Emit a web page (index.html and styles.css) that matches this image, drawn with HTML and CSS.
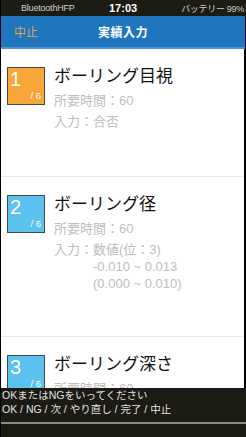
FILE: index.html
```html
<!DOCTYPE html>
<html lang="ja">
<head>
    <meta charset="UTF-8">
    <meta name="viewport" content="width=device-width, initial-scale=1.0">
    <title>実績入力</title>
    <link rel="stylesheet" href="styles.css">
</head>
<body>
    <div class="screen">
        <div class="statusbar">
            <span class="carrier">BluetoothHFP</span>
            <span class="clock">17:03</span>
            <span class="battery">バッテリー 99%</span>
        </div>
        <div class="navbar">
            <a class="nav-cancel" href="#">中止</a>
            <div class="nav-title">実績入力</div>
        </div>
        <div class="list">
            <div class="item">
                <div class="step step-current">
                    <span class="step-no">1</span>
                    <span class="step-total">/ 6</span>
                </div>
                <div class="item-body">
                    <div class="item-title">ボーリング目視</div>
                    <p class="detail">所要時間：60</p>
                    <p class="detail">入力：合否</p>
                </div>
            </div>
            <div class="item">
                <div class="step">
                    <span class="step-no">2</span>
                    <span class="step-total">/ 6</span>
                </div>
                <div class="item-body">
                    <div class="item-title">ボーリング径</div>
                    <p class="detail">所要時間：60</p>
                    <div class="detail input-row">
                        <span>入力：</span>
                        <span>数値(位：3)<br>-0.010 ~ 0.013<br>(0.000 ~ 0.010)</span>
                    </div>
                </div>
            </div>
            <div class="item">
                <div class="step">
                    <span class="step-no">3</span>
                    <span class="step-total">/ 6</span>
                </div>
                <div class="item-body">
                    <div class="item-title">ボーリング深さ</div>
                    <p class="detail">所要時間：60</p>
                </div>
            </div>
        </div>
        <div class="voice">
            <div class="voice-prompt">OKまたはNGをいってください</div>
            <div class="voice-prompt">OK / NG / 次 / やり直し / 完了 / 中止</div>
            <div class="voice-line"></div>
        </div>
    </div>
</body>
</html>
```

FILE: styles.css
```css
html, body {
    margin: 0;
    height: 100%;
    background-color: #000;
}
body {
    font-family: "Liberation Sans", "Noto Sans CJK JP", sans-serif;
    overflow: hidden;
}
.screen {
    position: relative;
    height: 437px;
    margin-left: 1px;
    overflow: hidden;
}
.statusbar {
    display: flex;
    align-items: center;
    height: 16px;
    background-color: #1c1b14;
    color: #cfcfcf;
    font-size: 9px;
    padding: 0 2px 0 20px;
}
.carrier {
    width: 88px;
    letter-spacing: -0.2px;
}
.clock {
    color: #fff;
    font-weight: bold;
    font-size: 11px;
    flex: 1;
}
.battery {
    letter-spacing: -0.3px;
}
.navbar {
    display: flex;
    align-items: center;
    height: 31px;
    margin-right: 1px;
    background-color: #1f75be;
    border-bottom: 2px solid #4d94d6;
}
.nav-cancel {
    width: 84px;
    padding-left: 13px;
    color: #d7a556;
    font-size: 12px;
    text-decoration: none;
}
.nav-title {
    color: #fff;
    font-size: 12px;
    font-weight: bold;
    letter-spacing: 0.5px;
}
.list {
    background-color: #fff;
    margin-right: 2px;
    height: 388px;
    overflow: hidden;
}
.item {
    display: flex;
    gap: 9px;
    padding: 18px 0 40px 6px;
    border-bottom: 1px solid #e8e8e8;
}
.item:first-child {
    padding-bottom: 42px;
}
.step {
    display: flex;
    flex-direction: column;
    justify-content: space-between;
    flex: none;
    width: 36px;
    height: 36px;
    border: 1px solid #4a4a4a;
    background-color: #5bc2ef;
    color: #fff;
}
.step-current {
    background-color: #f8a637;
}
.step-no {
    font-size: 20px;
    line-height: 22px;
    padding-left: 2px;
}
.step-total {
    align-self: flex-end;
    font-size: 9.5px;
    line-height: 11px;
    padding: 0 3px 3px 0;
}
.item-body {
    flex: 1;
}
.item-title {
    font-size: 17px;
    line-height: 20px;
    color: #111;
    margin-bottom: 5px;
}
.detail {
    margin: 0 0 4px;
    font-size: 13px;
    line-height: 17px;
    color: #bdbdbd;
}
.input-row {
    display: flex;
}
.voice {
    position: absolute;
    left: -1px;
    right: 0;
    bottom: 0;
    height: 49px;
    padding: 0 0 0 2px;
    box-sizing: border-box;
    background-color: #1b1a13;
    color: #e2e2e2;
}
.voice-prompt {
    font-size: 10.5px;
    line-height: 14px;
}
.voice-line {
    height: 2px;
    margin: 6px 0 0 -2px;
    background-color: #8a8a86;
}
```
